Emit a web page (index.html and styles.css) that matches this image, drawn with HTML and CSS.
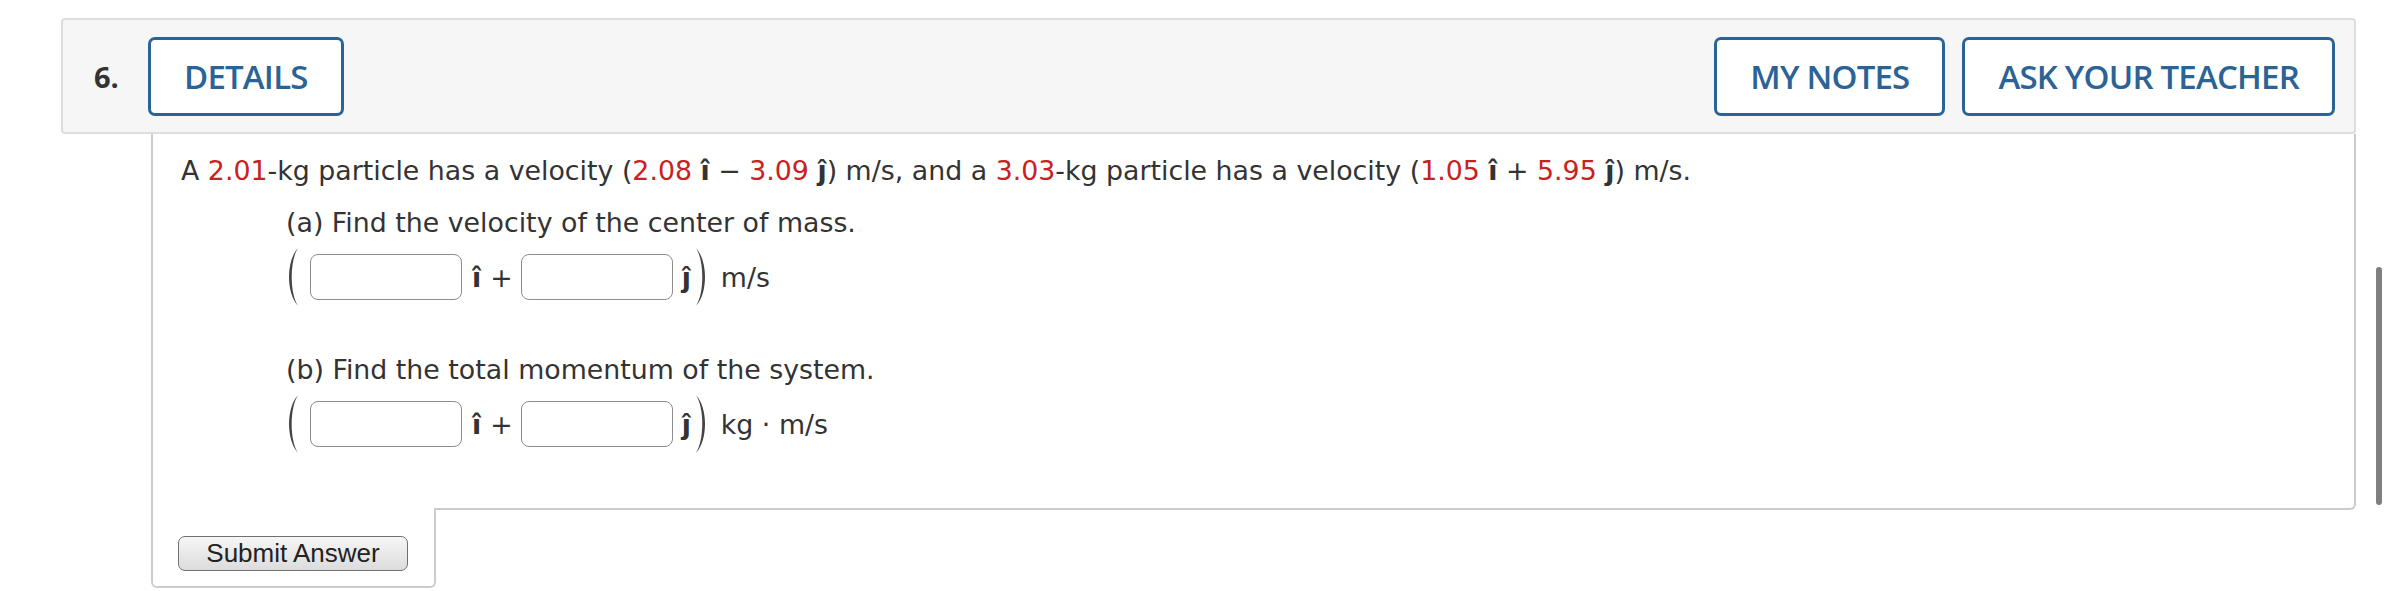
FILE: index.html
```html
<!DOCTYPE html>
<html>
<head>
<meta charset="utf-8">
<link rel="stylesheet" href="styles.css">
</head>
<body>
<div class="page">
  <div class="qhead">
    <span class="qnum">6.</span>
    <button class="hbtn details">DETAILS</button>
    <div class="spacer"></div>
    <button class="hbtn">MY NOTES</button>
    <button class="hbtn">ASK YOUR TEACHER</button>
  </div>
  <div class="qwrap">
    <div class="qbody">
      <p class="stem">A <span class="red">2.01</span>-kg particle has a velocity (<span class="red">2.08</span> <b>î</b> − <span class="red">3.09</span> <b>ĵ</b>) m/s, and a <span class="red">3.03</span>-kg particle has a velocity (<span class="red">1.05</span> <b>î</b> + <span class="red">5.95</span> <b>ĵ</b>) m/s.</p>
      <div class="part">
        <p class="label">(a) Find the velocity of the center of mass.</p>
        <div class="row">
          <svg class="paren" viewBox="0 0 18 60" width="18" height="60"><path d="M15 1 C 3 14, 3 46, 15 59 C 6.6 46, 6.6 14, 15 1 Z" fill="#444"/></svg>
          <span class="inp first"></span>
          <b class="unit">î</b><span class="plus">+</span>
          <span class="inp"></span>
          <b class="unit uj">ĵ</b>
          <svg class="paren rp" viewBox="0 0 18 60" width="18" height="60"><path d="M3 1 C 15 14, 15 46, 3 59 C 11.4 46, 11.4 14, 3 1 Z" fill="#444"/></svg>
          <span class="units">m/s</span>
        </div>
      </div>
      <div class="part partb">
        <p class="label">(b) Find the total momentum of the system.</p>
        <div class="row">
          <svg class="paren" viewBox="0 0 18 60" width="18" height="60"><path d="M15 1 C 3 14, 3 46, 15 59 C 6.6 46, 6.6 14, 15 1 Z" fill="#444"/></svg>
          <span class="inp first"></span>
          <b class="unit">î</b><span class="plus">+</span>
          <span class="inp"></span>
          <b class="unit uj">ĵ</b>
          <svg class="paren rp" viewBox="0 0 18 60" width="18" height="60"><path d="M3 1 C 15 14, 15 46, 3 59 C 11.4 46, 11.4 14, 3 1 Z" fill="#444"/></svg>
          <span class="units">kg · m/s</span>
        </div>
      </div>
    </div>
    <div class="submit-tab">
      <button class="submit">Submit Answer</button>
    </div>
  </div>
</div>
<div class="scrollbar"></div>
</body>
</html>
```
FILE: styles.css
```css
html, body {
  margin: 0;
  padding: 0;
  background: #ffffff;
}
body {
  font-family: "DejaVu Sans", Verdana, sans-serif;
  color: #333333;
}
.page {
  padding: 18px 32px 0 61px;
}
.qhead {
  display: flex;
  align-items: center;
  height: 116px;
  box-sizing: border-box;
  padding: 1px 19px 0 31px;
  background: #f6f6f6;
  border: 2px solid #dddddd;
  border-radius: 4px;
}
.qnum {
  font-family: "Open Sans", sans-serif;
  font-weight: 700;
  font-size: 29px;
  color: #333333;
  width: 54px;
}
.spacer {
  flex: 1;
}
.hbtn {
  height: 79px;
  box-sizing: border-box;
  padding: 0 33px;
  background: #ffffff;
  border: 3px solid #2b6396;
  border-radius: 7px;
  color: #2b6396;
  font-family: "Open Sans", sans-serif;
  font-weight: 600;
  font-size: 33px;
  letter-spacing: -0.8px;
  margin-left: 17px;
  cursor: pointer;
}
.hbtn.details {
  margin-left: 0;
}
.qwrap {
  margin-left: 90px;
}
.qbody {
  border: 2px solid #cccccc;
  border-top: none;
  border-radius: 0 0 6px 0;
  padding: 21px 28px 54px 28px;
  font-size: 26.8px;
}
.qbody p {
  margin: 0;
  line-height: 32px;
}
.red {
  color: #c9211e;
}
.part {
  padding-left: 105px;
  margin-top: 20px;
}
.partb {
  margin-top: 47px;
}
.row {
  display: flex;
  align-items: center;
  height: 60px;
  margin-top: 8px;
  margin-left: -3px;
}
.paren {
  display: block;
  flex: none;
}
.inp {
  display: inline-block;
  flex: none;
  width: 152px;
  height: 46px;
  box-sizing: border-box;
  border: 1.5px solid #8c8c8c;
  border-radius: 8px;
  background: #ffffff;
  margin-left: 8px;
}
.inp.first {
  margin-left: 9px;
}
.unit {
  margin-left: 10px;
  font-weight: 700;
}
.uj {
  margin-left: 9px;
}
.plus {
  margin: 0 0 0 9px;
}
.rp {
  margin-left: 2px;
}
.units {
  margin-left: 10px;
}
.submit-tab {
  width: 285px;
  box-sizing: border-box;
  margin-top: -2px;
  height: 80px;
  background: #ffffff;
  border: 2px solid #cccccc;
  border-top: none;
  border-radius: 0 0 6px 6px;
  padding: 28px 0 0 25px;
}
.submit {
  display: block;
  width: 230px;
  height: 35px;
  border: 1px solid #707070;
  border-radius: 7px;
  background: linear-gradient(#f6f6f6, #dcdcdc);
  font-family: "Liberation Sans", Arial, sans-serif;
  font-size: 26px;
  color: #222222;
  padding: 0;
}
.scrollbar {
  position: absolute;
  left: 2376px;
  top: 267px;
  width: 6px;
  height: 238px;
  border-radius: 3px;
  background: #808080;
}
```
